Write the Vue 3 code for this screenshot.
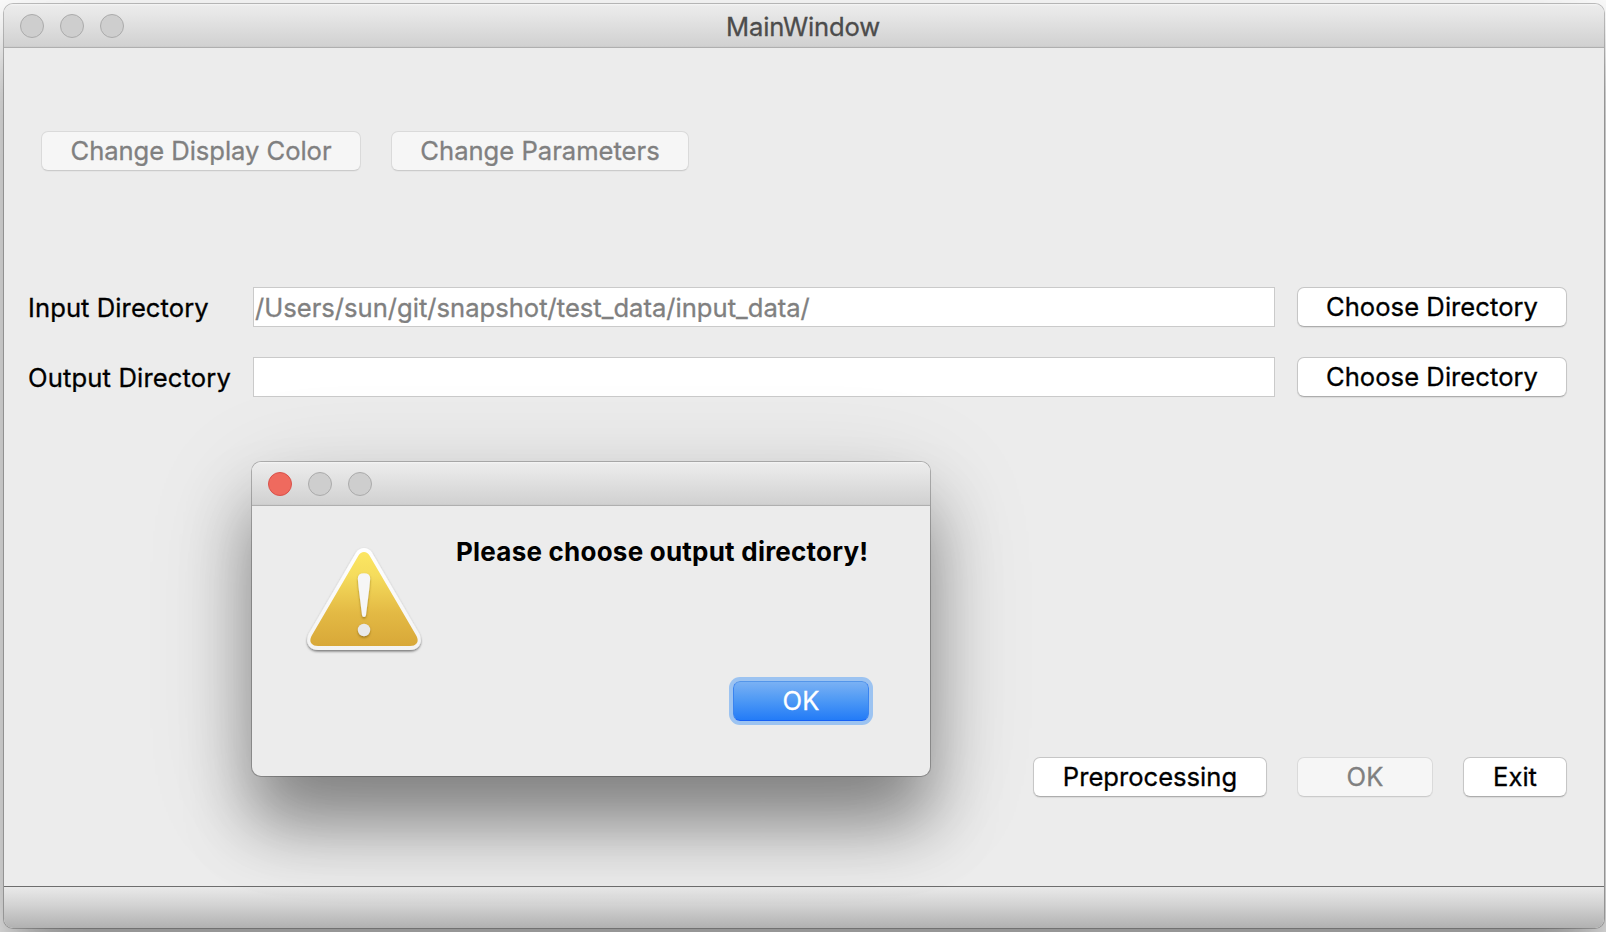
<script setup>
const rows = [
  { label: 'Input Directory', cls: 'l-in', value: '/Users/sun/git/snapshot/test_data/input_data/' },
  { label: 'Output Directory', cls: 'l-out', value: '' },
]
</script>

<template>
  <div class="desktop">
    <main class="window main">
      <header class="titlebar">
        <div class="lights"><i></i><i></i><i></i></div>
        <h1><span class="t t-title">MainWindow</span></h1>
      </header>
      <section class="content">
        <div class="tools">
          <button class="btn off w-color"><span class="t t-color">Change Display Color</span></button>
          <button class="btn off w-params"><span class="t">Change Parameters</span></button>
        </div>
        <div class="rows">
          <div v-for="r in rows" :key="r.label" class="row">
            <label><span class="t" :class="r.cls">{{ r.label }}</span></label>
            <div class="field"><span class="t">{{ r.value }}</span></div>
            <button class="btn w-choose"><span class="t t-choose">Choose Directory</span></button>
          </div>
        </div>
        <div class="actions">
          <button class="btn w-pre"><span class="t">Preprocessing</span></button>
          <button class="btn off w-ok"><span class="t">OK</span></button>
          <button class="btn w-exit"><span class="t">Exit</span></button>
        </div>
      </section>
      <footer class="status"></footer>
    </main>

    <div class="window dialog">
      <header class="titlebar">
        <div class="lights"><i class="red"></i><i></i><i></i></div>
      </header>
      <div class="message">
        <svg class="warn" width="126" height="118" viewBox="0 0 126 118">
          <defs>
            <linearGradient id="gold" x1="0" y1="0" x2="0" y2="1">
              <stop offset="0" stop-color="#fce662" />
              <stop offset=".25" stop-color="#f5dc5c" />
              <stop offset=".65" stop-color="#e3b944" />
              <stop offset="1" stop-color="#d8a838" />
            </linearGradient>
            <linearGradient id="rim" x1="0" y1="0" x2="0" y2="1">
              <stop offset="0" stop-color="#fff" />
              <stop offset="1" stop-color="#f3f3f3" />
            </linearGradient>
            <filter id="drop" x="-10%" y="-10%" width="120%" height="125%">
              <feDropShadow dx="0" dy="1.5" stdDeviation="1.2" flood-color="#000" flood-opacity=".5" />
            </filter>
            <filter id="small" x="-30%" y="-10%" width="160%" height="125%">
              <feDropShadow dx="0" dy="1.5" stdDeviation=".8" flood-color="#6b4c00" flood-opacity=".55" />
            </filter>
          </defs>
          <path filter="url(#drop)" fill="url(#rim)" d="M56 11.500Q59 7 64 7Q69 7 72 11.500L119.500 93Q122.500 100 119 105Q116 109 109.500 109H18.500Q12 109 9 105Q5.500 100 8.500 93Z" />
          <path fill="url(#gold)" d="M58.500 14.500Q60.500 11 64 11Q67.500 11 69.500 14.500L116.500 95Q119 100 116.500 102.500Q114.500 105 110 105H18Q13.500 105 11.500 102.500Q9 100 11.500 95Z" />
          <g filter="url(#small)" fill="#f6f6f6">
            <path d="M57.800 37.500Q57.800 32.300 64 32.300Q70.200 32.300 70.200 37.500L69.500 46L66 74Q65.800 76 64 76Q62.200 76 62 74L58.500 46Z" />
            <circle cx="64" cy="89" r="6.200" fill="#e9e9e9" />
          </g>
        </svg>
        <p><span class="t">Please choose output directory!</span></p>
      </div>
      <div class="confirm">
        <button class="btn primary"><span class="t">OK</span></button>
      </div>
    </div>
  </div>
</template>

<style>
html, body { margin: 0; overflow: hidden; }
</style>

<style scoped>
* { box-sizing: border-box; }
.desktop {
  position: relative;
  width: 1606px;
  height: 932px;
  padding: 4px 2px 4px 4px;
  background: #fff;
  overflow: hidden;
  font-family: Inter, "Liberation Sans", sans-serif;
  font-size: 25.6px;
  color: #000;
}
.window {
  display: flex;
  flex-direction: column;
  background: #ececec;
  border-radius: 9px;
  box-shadow:
    0 0 0 1px rgba(0, 0, 0, .24),
    0 48px 66px rgba(0, 0, 0, .38),
    0 26px 110px rgba(0, 0, 0, .15);
}
.main { width: 1600px; height: 924px; }
.titlebar {
  position: relative;
  flex: none;
  height: 44px;
  padding: 10px 16px;
  border-radius: 9px 9px 0 0;
  border-bottom: 1px solid #afafaf;
  background: linear-gradient(#f5f5f5 0, #ebebeb 2px, #e8e8e8 8px, #d1d1d1 42px, #c8c8c8 43px);
}
.lights { display: flex; gap: 16px; }
.lights i {
  width: 24px;
  height: 24px;
  border-radius: 50%;
  border: 1px solid #ababab;
  background: #cecece;
}
.lights i.red { background: #ef6a5e; border-color: #d9514a; }
h1 {
  position: absolute;
  inset: 0;
  margin: 0;
  padding-right: 2px;
  text-align: center;
  font-size: inherit;
  font-weight: 400;
  line-height: 45px;
  color: #4c4c4c;
}
.t { display: inline-block; white-space: pre; -webkit-text-stroke: .3px currentColor; }
.t-title { letter-spacing: -.15px; }
.t-color { letter-spacing: -.05px; }
.l-in { letter-spacing: .07px; }
.l-out { letter-spacing: .14px; }
.t-choose { letter-spacing: .04px; }
.content { flex: 1; padding: 83px 37px 0 24px; }
.tools { display: flex; gap: 30px; padding-left: 13px; }
.btn {
  display: flex;
  align-items: center;
  justify-content: center;
  height: 40px;
  padding: 0 0 2px;
  border: 1px solid #c6c6c6;
  border-bottom-color: #adadad;
  border-radius: 7px;
  background: #fff;
  box-shadow: 0 1px 1px rgba(0, 0, 0, .08);
  font: inherit;
  color: #000;
}
.off {
  background: #f6f6f6;
  border-color: #dadada;
  border-bottom-color: #cbcbcb;
  color: #808080;
  box-shadow: 0 1px 1px rgba(0, 0, 0, .03);
}
.w-color { width: 320px; }
.w-params { width: 298px; }
.w-choose { width: 270px; }
.w-pre { width: 234px; }
.w-ok { width: 136px; }
.w-exit { width: 104px; }
.rows { display: grid; gap: 30px; margin-top: 116px; }
.row { display: grid; grid-template-columns: 225px 1022px 270px; height: 40px; justify-content: start; }
.row .btn { margin-left: 22px; }
label { line-height: 41px; }
.field {
  height: 40px;
  padding-left: 1px;
  border: 1px solid #cacaca;
  background: #fff;
  line-height: 39px;
  color: #808080;
}
.actions { display: flex; justify-content: flex-end; gap: 30px; margin-top: 360px; }
.status {
  flex: none;
  height: 42px;
  border-top: 1px solid #6e6e6e;
  border-radius: 0 0 9px 9px;
  background: linear-gradient(#e9e9e9, #d2d2d2 45%, #b1b1b1);
}
.dialog { position: absolute; left: 252px; top: 462px; width: 678px; height: 314px; }
.message { display: flex; height: 171px; padding: 35px 0 0 48px; }
.warn { flex: none; }
.message p { margin: -11px 0 0 30px; font-size: 26px; font-weight: 700; line-height: 44px; letter-spacing: .23px; }
.message .t { -webkit-text-stroke: 0; }
.confirm { display: flex; justify-content: flex-end; padding: 4px 61px 0 0; }
.primary {
  width: 136px;
  color: #fff;
  border-color: #5496ea #3a84f0 #1560f5;
  background: linear-gradient(#7ab1f4, #4c98f5 50%, #237bf7);
  box-shadow: 0 0 0 4px #9cc3f1;
}
</style>
